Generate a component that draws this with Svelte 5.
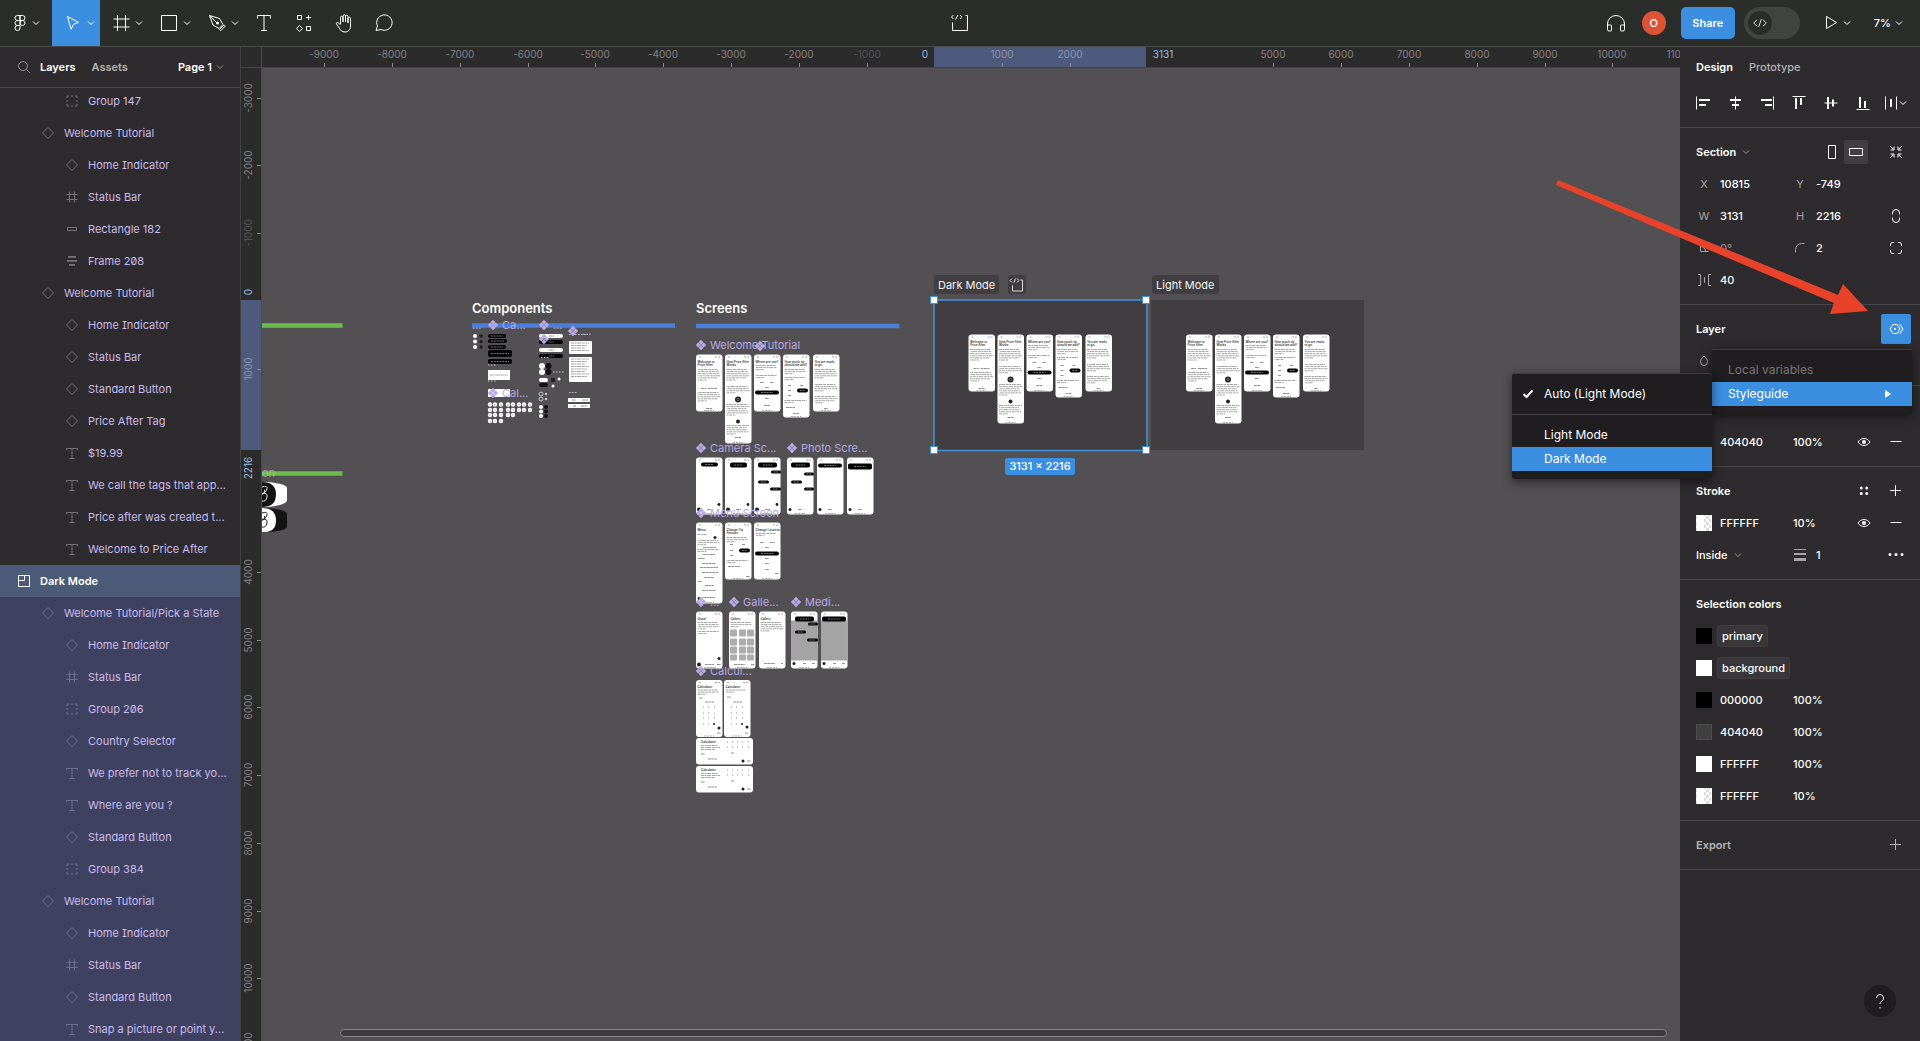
<script lang="ts">
  type Icon = { s?: string; f?: string };
  const icons: Record<string, Icon> = {
    figma: { s: 'M9.5 4.5h2.5v5H9.5a2.5 2.5 0 0 1 0-5zM12 4.5h2.5a2.5 2.5 0 0 1 0 5H12zM9.5 9.5H12v5H9.5a2.5 2.5 0 0 1 0-5zM14.5 9.5a2.5 2.5 0 1 1 0 5a2.5 2.5 0 1 1 0-5zM9.5 14.5H12v2.500a2.500 2.500 0 1 1-2.500-2.500z' },
    cursor: { s: 'M6.500 5.500l11 6-5 1.800-2.500 5z' },
    frame: { s: 'M8.500 4v16M16.500 4v16M4.500 8h16M4.500 16h16' },
    square: { s: 'M4.500 4.500h15v15h-15z' },
    pen: { s: 'M4.500 4.500l3.500 9.500 6 3.500 4-4-3.500-6zM4.500 4.500l7.200 7.200M14.500 18.500l4.500-4.500 1.200 1.200-4.500 4.500z', f: 'M12.500 10.500a1.500 1.500 0 1 1 0 3a1.500 1.500 0 1 1 0-3z' },
    text: { s: 'M5.500 7.500v-3h13v3M12 4.500v15M9 19.500h6' },
    resources: { s: 'M5.500 4.500h4v4h-4zM14.500 15.500h4v4h-4zM16.500 4v5M14 6.500h5M7.500 14.500l3 3-3 3-3-3z' },
    hand: { s: 'M8.500 13V6.500a1.250 1.250 0 0 1 2.500 0V11M11 11V5a1.250 1.250 0 0 1 2.500 0v6M13.500 11V5.500a1.250 1.250 0 0 1 2.500 0V12M16 12V7.500a1.250 1.250 0 0 1 2.500 0V15c0 3.500-2 6-5.500 6-3 0-4.500-1.500-5.800-4L4.500 13c-.6-1.300 1-2.200 2-1.200L8.500 14' },
    comment: { s: 'M4 19.500l1.500-4.500a7.700 7.700 0 1 1 3.500 3.500z' },
    devready: { s: 'M17.500 4.500h2v15h-15v-8M5.500 4L3.500 6l2 2M12 4l2 2-2 2M10 4L7.500 8.500' },
    headphones: { s: 'M3.500 18v-5a8.500 8.500 0 0 1 17 0v5M3.500 14h3a1 1 0 0 1 1 1v4a1 1 0 0 1-1 1h-1.500a1.500 1.500 0 0 1-1.500-1.500zM20.500 14h-3a1 1 0 0 0-1 1v4a1 1 0 0 0 1 1h1.500a1.500 1.500 0 0 0 1.500-1.500z' },
    code: { s: 'M8.500 8L4.500 12l4 4M15.500 8l4 4-4 4M13.500 7.500l-3 9' },
    play: { s: 'M7.500 5.500v12l10-6z' },
    search: { s: 'M11 6.500a4.500 4.500 0 1 1 0 9a4.500 4.500 0 1 1 0-9zM14.300 14.300l3.700 3.700' },
    component: { s: 'M12 6.500l5.500 5.500-5.500 5.500L6.500 12z' },
    smallframe: { s: 'M9.500 6.500v11M14.500 6.500v11M6.500 9.500h11M6.500 14.500h11' },
    group: { s: 'M7 9V7h2M11 7h2M15 7h2v2M17 11v2M17 15v2h-2M13 17h-2M9 17H7v-2M7 13v-2' },
    rectangle: { s: 'M7.500 10.500h9v3h-9z' },
    stack: { f: 'M8 7h8v1.800H8zM7 11h10v1.800H7zM9 15h6v1.800H9z' },
    type: { s: 'M6.500 9V7.500h11V9M12 7.500v10M9.500 17.500h5' },
    section: { s: 'M6.500 6.500h11v11h-11zM6.500 11.500h6v-5' },
    alignleft: { s: 'M5.500 5.500v13', f: 'M8 8h11v2H8zM8 13h7v2H8z' },
    aligncenter: { s: 'M12.500 5.500v13', f: 'M7 8h11v2H7zM9 13h7v2H9z' },
    alignright: { s: 'M18.500 5.500v13', f: 'M6 8h11v2H6zM10 13h7v2h-7z' },
    aligntop: { s: 'M5.500 5.500h13', f: 'M8 7h2v11H8zM13 7h2v7h-2z' },
    alignmiddle: { s: 'M5.500 12h13', f: 'M8 6h2v12H8zM13 8.500h2v7h-2z' },
    alignbottom: { s: 'M5.500 18.500h13', f: 'M8 6h2v11H8zM13 10h2v7h-2z' },
    distribute: { s: 'M6.500 5.500v13M17.500 5.500v13', f: 'M11 8h2v8h-2z' },
    portrait: { s: 'M8.500 5.500h7v13h-7z' },
    landscape: { s: 'M5.500 8.500h13v7h-13z' },
    shrink: { s: 'M6 6l3.500 3.500M10 6.500V10H6.500M18 6l-3.500 3.500M14 6.500V10h3.500M6 18l3.500-3.500M10 17.500V14H6.500M18 18l-3.500-3.500M14 17.500V14h3.500' },
    link: { s: 'M8.500 10.500V9a3.500 3.500 0 0 1 7 0v1.500M8.500 13.500V15a3.500 3.500 0 0 0 7 0v-1.500' },
    corners: { s: 'M6.500 10V8.500a2 2 0 0 1 2-2H10M14 6.500h1.500a2 2 0 0 1 2 2V10M17.500 14v1.500a2 2 0 0 1-2 2H14M10 17.500H8.500a2 2 0 0 1-2-2V14' },
    angle: { s: 'M8.500 7.500v8h8M8.500 10.500a5 5 0 0 1 5 5' },
    radius: { s: 'M7.500 16.500v-3a6 6 0 0 1 6-6h3' },
    spacing: { s: 'M6 6.500h2.500v11H6M12.500 9v6M19 6.500h-2.500v11H19' },
    drop: { s: 'M12 7c2 2 3.500 3.500 3.500 5.500a3.500 4 0 0 1-7 0C8.500 10.500 10 9 12 7z' },
    eye: { s: 'M6 12c3.200-4.700 8.800-4.700 12 0c-3.200 4.700-8.800 4.700-12 0z', f: 'M12 10a2 2 0 1 1 0 4a2 2 0 1 1 0-4z' },
    minus: { s: 'M6.500 11.500h11' },
    plus: { s: 'M6 11.500h11M11.500 6v11' },
    dots: { f: 'M9.300 7.500a1.500 1.500 0 1 1 0 3a1.500 1.500 0 1 1 0-3zM14.700 7.500a1.500 1.500 0 1 1 0 3a1.500 1.500 0 1 1 0-3zM9.300 13a1.500 1.500 0 1 1 0 3a1.500 1.500 0 1 1 0-3zM14.700 13a1.500 1.500 0 1 1 0 3a1.500 1.500 0 1 1 0-3z' },
    more: { f: 'M6 10a1.500 1.500 0 1 1 0 3a1.500 1.500 0 1 1 0-3zM12 10a1.500 1.500 0 1 1 0 3a1.500 1.500 0 1 1 0-3zM18 10a1.500 1.500 0 1 1 0 3a1.500 1.500 0 1 1 0-3z' },
    weight: { f: 'M6 6h12v1H6zM6 10h12v2H6zM6 15h12v3H6z' },
    variables: { s: 'M9 7.500h4l3 4.500-3 4.500H9L6 12zM15 7.500h1l3 4.500-3 4.500h-1', f: 'M11 11a1 1 0 1 1 0 2a1 1 0 1 1 0-2z' },
    help: { s: 'M8.500 9a3.500 3.500 0 1 1 5.500 3c-1.300.9-2 1.500-2 3M12 18v1.500' },
    check: { s: 'M7.500 12l3 3 6-6.500' },
  };

  const tools = [
    { icon: 'figma', label: 'Main menu', menu: true, cls: 'main' },
    { icon: 'cursor', label: 'Move', menu: true, cls: 'active' },
    { icon: 'frame', label: 'Frame', menu: true, cls: '' },
    { icon: 'square', label: 'Rectangle', menu: true, cls: '' },
    { icon: 'pen', label: 'Pen', menu: true, cls: '' },
    { icon: 'text', label: 'Text', menu: false, cls: '' },
    { icon: 'resources', label: 'Resources', menu: false, cls: '' },
    { icon: 'hand', label: 'Hand', menu: false, cls: '' },
    { icon: 'comment', label: 'Comment', menu: false, cls: '' },
  ];

  const layers: [number, string, string][] = [
    [2, 'group', 'Group 147'],
    [1, 'component', 'Welcome Tutorial'],
    [2, 'component', 'Home Indicator'],
    [2, 'smallframe', 'Status Bar'],
    [2, 'rectangle', 'Rectangle 182'],
    [2, 'stack', 'Frame 208'],
    [1, 'component', 'Welcome Tutorial'],
    [2, 'component', 'Home Indicator'],
    [2, 'component', 'Status Bar'],
    [2, 'component', 'Standard Button'],
    [2, 'component', 'Price After Tag'],
    [2, 'type', '$19.99'],
    [2, 'type', 'We call the tags that app...'],
    [2, 'type', 'Price after was created t...'],
    [2, 'type', 'Welcome to Price After'],
    [0, 'section', 'Dark Mode'],
    [1, 'component', 'Welcome Tutorial/Pick a State'],
    [2, 'component', 'Home Indicator'],
    [2, 'smallframe', 'Status Bar'],
    [2, 'group', 'Group 206'],
    [2, 'component', 'Country Selector'],
    [2, 'type', 'We prefer not to track yo...'],
    [2, 'type', 'Where are you ?'],
    [2, 'component', 'Standard Button'],
    [2, 'group', 'Group 384'],
    [1, 'component', 'Welcome Tutorial'],
    [2, 'component', 'Home Indicator'],
    [2, 'smallframe', 'Status Bar'],
    [2, 'component', 'Standard Button'],
    [2, 'type', 'Snap a picture or point y...'],
  ];
  const selected = 15;

  const hTicks = [-9, -8, -7, -6, -5, -4, -3, -2, -1, 1, 2, 5, 6, 7, 8, 9, 10, 11];
  const vTicks = [-3, -2, -1, 1, 4, 5, 6, 7, 8, 9, 10, 11];
  const hx = (n: number) => Math.round(934.4 + n * 67.8);
  const vy = (n: number) => Math.round(300.8 + n * 67.75);

  const aligns = ['alignleft', 'aligncenter', 'alignright', 'aligntop', 'alignmiddle', 'alignbottom', 'distribute'];
  const colors = [
    { sw: 'black', hex: '000000', op: '100%' },
    { sw: 'grey', hex: '404040', op: '100%' },
    { sw: 'white', hex: 'FFFFFF', op: '100%' },
    { sw: 'half', hex: 'FFFFFF', op: '10%' },
  ];

  // Paragraphs are [first line y, line count]; pills are [x, y, width, height].
  type Phone = {
    x: number; h: number; title?: string[]; para?: [number, number][];
    pills?: [number, number, number, number][]; dots?: [number, number, number][];
    marks?: [number, number, number][]; grey?: boolean; tiles?: boolean;
  };
  const tutorial: Phone[] = [
    { x: 0, h: 57, title: ['Welcome to', 'Price After'], para: [[15, 6], [38, 5]], marks: [[5, 34, 5], [12, 34, 9], [10, 54, 6]] },
    { x: 29, h: 89, title: ['How Price After', 'Works'], para: [[15, 6], [32, 4], [50, 6], [71, 5]], dots: [[13, 45, 3], [13, 67, 2]], marks: [[10, 83, 6]] },
    { x: 58, h: 57, title: ['Where are you?'], para: [[11, 3], [21, 2]], marks: [[6, 28, 4], [16, 28, 4], [11, 33, 4], [11, 44, 4], [10, 51, 6]], pills: [[1, 36, 24, 4]] },
    { x: 87, h: 63, title: ['How much tip', 'should we add?'], para: [[15, 3], [23, 2], [46, 2]], marks: [[5, 31, 3], [17, 31, 3], [5, 36, 3], [5, 41, 3], [3, 53, 9], [10, 59, 6]], pills: [[14, 34, 11, 4]] },
    { x: 117, h: 57, title: ['You are ready', 'to go.'], para: [[15, 5], [30, 4], [42, 4]], marks: [[11, 54, 4]] },
  ];
  const camera: Phone[] = [
    { x: 696, h: 57, pills: [[5, 5, 17, 4]], marks: [[11, 52, 5], [21, 47, 3]], dots: [[3, 52, 2], [23, 47, 1.4]] },
    { x: 725, h: 57, pills: [[5, 5, 17, 5]], marks: [[11, 52, 5]], dots: [[3, 52, 2], [23, 47, 1.4]] },
    { x: 754, h: 57, pills: [[4, 5, 19, 5], [17, 13, 10, 3], [4, 23, 11, 3], [16, 30, 11, 3]], marks: [[11, 52, 5]], dots: [[3, 52, 2], [23, 47, 1.4]] },
    { x: 787, h: 57, pills: [[4, 5, 19, 5], [17, 15, 10, 3], [4, 23, 11, 3], [17, 30, 10, 3]], marks: [[11, 52, 4]], dots: [[3, 52, 1.500]] },
    { x: 817, h: 57, pills: [[1, 6, 24, 4]], marks: [[11, 52, 4]], dots: [[3, 52, 1.500]] },
    { x: 847, h: 57, pills: [[1, 6, 24, 6]], marks: [[11, 52, 4]], dots: [[3, 52, 1.500]] },
  ];
  const menus: Phone[] = [
    { x: 696, h: 81, title: ['Menu'], para: [[12, 1], [18, 3], [27, 2]], marks: [[7, 25, 13], [7, 32, 12], [2, 36, 7], [6, 41, 14], [4, 45, 18], [6, 50, 16], [8, 55, 10], [2, 59, 4], [9, 63, 9], [6, 68, 14], [7, 75, 12]], dots: [[19, 15, 1.500], [3, 76, 1.500]] },
    { x: 725, h: 57, title: ['Change Tip', 'Amount'], para: [[15, 3], [38, 2]], marks: [[5, 22, 3], [17, 22, 3], [5, 28, 3], [5, 33, 3], [3, 44, 12], [21, 54, 4]], pills: [[14, 26, 11, 4]] },
    { x: 754, h: 57, title: ['Change Location'], para: [[11, 2]], marks: [[6, 20, 4], [16, 20, 5], [11, 25, 4], [11, 36, 4], [11, 41, 4], [11, 47, 4], [21, 51, 4]], pills: [[1, 29, 24, 4]] },
  ];
  const gallery: Phone[] = [
    { x: 696, h: 57, title: ['Oops!'], para: [[11, 4], [20, 2]], marks: [[9, 53, 9], [21, 53, 4]], dots: [[3, 53, 2], [23, 47, 1.500]] },
    { x: 729, h: 57, title: ['Gallery'], para: [[11, 3]], tiles: true, marks: [[5, 53, 11], [22, 53, 3]] },
    { x: 759, h: 57, title: ['Gallery'], para: [[11, 5]], marks: [[5, 52, 11], [22, 52, 2]] },
    { x: 791, h: 57, grey: true, pills: [[4, 5, 19, 5], [17, 11, 10, 3], [4, 19, 11, 3], [16, 27, 11, 3]], marks: [[12, 52, 3], [21, 52, 3]], dots: [[3, 52, 1.500]] },
    { x: 821, h: 57, grey: true, pills: [[1, 5, 24, 5]], marks: [[12, 52, 3], [21, 52, 3]], dots: [[3, 52, 1.500]] },
  ];
  const keys: [number, number, number][] = [27, 33, 38, 44].flatMap((y) => [[7, y, 1], [12, y, 1], [18, y, 1]] as [number, number, number][]);
  const calculator: Phone[] = [
    { x: 696, h: 57, title: ['Calculator'], para: [[10, 3]], marks: [[3, 18, 4], [9, 22, 9], ...keys, [21, 53, 4]], dots: [[18, 44, 1], [23, 48, 1.500]] },
    { x: 724, h: 57, title: ['Calculator'], para: [[10, 2]], marks: [[3, 17, 4], [9, 22, 9], ...keys, [21, 53, 3]], dots: [[18, 44, 1], [23, 47, 1.500]] },
  ];

  const labels: [number, number, string][] = [
    [701, 345, 'Welcome Tutorial'], [760, 346, ''],
    [701, 448, 'Camera Sc...'], [792, 448, 'Photo Scre...'],
    [701, 513, 'Menu Screen'],
    [701, 602, '...'], [734, 602, 'Galle...'], [796, 602, 'Medi...'],
    [701, 671, 'Calcul...'],
    [493, 325, 'Ca...'], [544, 325, '...'], [544, 339, ''], [573, 331, '...'], [493, 393, 'Cal...'],
  ];
  const keypad: [number, number][] = [
    ...[0, 1].flatMap((r) => [490, 495, 501, 508, 513, 519, 524, 530].map((x) => [x, 404.500 + r * 5.500] as [number, number])),
    [490, 415], [495, 415], [501, 415], [508, 415], [513, 415], [490, 421], [495, 421], [501, 421],
  ];
</script>

{#snippet icon(name: string)}
  <svg class="icon" width="24" height="24" viewBox="0 0 24 24" aria-hidden="true">
    {#if icons[name].s}<path class="stroke" d={icons[name].s} />{/if}
    {#if icons[name].f}<path class="solid" d={icons[name].f} />{/if}
  </svg>
{/snippet}

{#snippet chev()}
  <svg class="chev" width="8" height="8" viewBox="0 0 8 8" aria-hidden="true"><path class="stroke" d="M1 2.500l3 3 3-3" /></svg>
{/snippet}

{#snippet phone(p: Phone, x: number, y: number)}
  <g transform="translate({x} {y})">
    <rect width="26.500" height={p.h} rx="3" fill="#fff" />
    <path d="M3 2.500h3M19 2.500h5" class="faint" />
    <path d="M8 {p.h - 1}h10" class="faint" />
    {#if p.grey}<rect y="9" width="26.500" height="40" fill="#a5a4a5" />{/if}
    {#if p.tiles}
      {#each [18, 27, 35, 43] as ty}
        {#each [1, 10, 18] as tx}<rect x={tx} y={ty} width="7" height={ty === 43 ? 6 : 7} rx="1" fill="#adadad" />{/each}
      {/each}
    {/if}
    {#each p.title ?? [] as line, i}<text class="tiny" x="1.500" y={8 + i * 3.500}>{line}</text>{/each}
    {#each p.para ?? [] as [py, n], k}
      {#each Array(n) as _, i}
        <path class="line" stroke-dashoffset={i * 3 + k * 2} d="M1.500 {py + i * 2.100}h{i === n - 1 ? 9 : 20 + ((i * 5 + k) % 4)}" />
      {/each}
    {/each}
    {#each p.marks ?? [] as [mx, my, w]}<path class="mark" d="M{mx} {my}h{w}" />{/each}
    {#each p.pills ?? [] as [px, py, w, h]}
      <rect x={px} y={py} width={w} height={h} rx={h > 4 ? 1.800 : h / 2} fill="#050505" />
      <path class="pilltext" d="M{px + w * 0.25} {py + h / 2}h{w / 2}" />
    {/each}
    {#each p.dots ?? [] as [cx, cy, r]}
      <circle {cx} {cy} {r} fill="#222" />
      {#if r > 2.500}<circle {cx} {cy} r="1.200" fill="none" stroke="#999" stroke-width=".6" />{/if}
    {/each}
  </g>
{/snippet}

{#snippet diamonds(x: number, y: number)}
  <path transform="translate({x} {y})" fill="#b9a9e6" d="M0-5.200l2.500 2.500L0-.2l-2.500-2.500zM0 .2l2.500 2.500L0 5.200l-2.500-2.500zM-2.700-2.500L-.2 0l-2.500 2.500L-5.200 0zM2.700-2.500L5.200 0 2.700 2.500.2 0z" />
{/snippet}

<div class="app">
  <header class="toolbar">
    <nav class="tools" aria-label="Tools">
      {#each tools as t}
        <button class="tool {t.cls}" class:wide={t.menu} aria-label={t.label}>
          {@render icon(t.icon)}
          {#if t.menu}{@render chev()}{/if}
        </button>
      {/each}
    </nav>
    <button class="tool" aria-label="Ready for dev">{@render icon('devready')}</button>
    <div class="actions">
      <button class="plain" aria-label="Audio">{@render icon('headphones')}</button>
      <button class="avatar" aria-label="Account">O</button>
      <button class="share">Share</button>
      <label class="toggle"><input type="checkbox" aria-label="Dev mode" /><span class="knob">{@render icon('code')}</span></label>
      <button class="plain play" aria-label="Present">{@render icon('play')}{@render chev()}</button>
      <button class="plain zoom">7%{@render chev()}</button>
    </div>
  </header>

  <aside class="left">
    <div class="lefthead">
      <button class="plain dim" aria-label="Search">{@render icon('search')}</button>
      <button class="plain bold">Layers</button>
      <button class="plain bold soft assets">Assets</button>
      <button class="plain bold page">Page 1{@render chev()}</button>
    </div>
    <div class="scroll">
      <ul class="layers">
        {#each layers as [level, kind, name], i}
          <li class="layer l{level}" class:sel={i === selected} class:child={i > selected}>
            {@render icon(kind)}<span>{name}</span>
          </li>
        {/each}
      </ul>
    </div>
  </aside>

  <main class="stage">
    <div class="corner"></div>
    <svg class="hruler" aria-label="Horizontal ruler">
      <g transform="translate(-262 -47)">
        <rect x="934" y="47" width="212" height="20" class="range" />
        {#each hTicks as n}
          <text x={hx(n)} y="58" class="num" class:fade={n === -1} class:inrange={n === 1 || n === 2}>{n * 1000}</text>
          <path d="M{hx(n) + 0.5} 63v4" class="tick" />
        {/each}
        <text x="925" y="58" class="num edge">0</text>
        <text x="1163" y="58" class="num edge">3131</text>
      </g>
    </svg>
    <svg class="vruler" aria-label="Vertical ruler">
      <g transform="translate(-241 -68)">
        <rect x="241" y="300" width="20" height="150" class="range" />
        {#each vTicks as n}
          <text transform="translate(252 {vy(n)}) rotate(-90)" class="num" class:fade={n === -1} class:inrange={n === 1}>{n * 1000}</text>
          <path d="M257 {vy(n) + 0.5}h4" class="tick" />
        {/each}
        <text transform="translate(252 292) rotate(-90)" class="num edge">0</text>
        <text transform="translate(252 468) rotate(-90)" class="num edge">2216</text>
      </g>
    </svg>
    <div class="canvas">
      <svg class="art" role="img" aria-label="Canvas">
        <g transform="translate(-262 -68)">
          <path d="M262 325.500h80.500M262 473.500h80.500" stroke="#6bbd50" stroke-width="4.500" />
          <text x="262" y="477" class="label cut">on</text>
          <path d="M262 482h6q19 2 19 6v12q0 5-19 7h-6z" fill="#fff" />
          <path d="M262 482q14 0 14 12.500T262 507z" fill="#141314" />
          <path d="M262 508h6q19 2 19 6v12q0 5-19 6h-6z" fill="#141314" />
          <path d="M262 508q14 0 14 12.500T262 532z" fill="#fff" />
          <path d="M262 487q6-2 5 2t-5 5q6-2 5 3t-5 4M264 490q2 0 0 3" class="squiggle" stroke="#ddd" />
          <path d="M262 513q6-2 5 2t-5 5q6-2 5 3t-5 4M264 516q2 0 0 3" class="squiggle" stroke="#222" />

          <text x="472" y="313" class="title">Components</text>
          <text x="696" y="313" class="title">Screens</text>
          <path d="M472 325.500h203M696 326h203.500" stroke="#4a7fd9" stroke-width="4.500" />

          {#each [336, 341.500, 347] as y}
            <circle cx="475" cy={y} r="2" fill="#fff" /><circle cx="481" cy={y} r="1.800" fill="#222" />
          {/each}
          {#each [[488, 334, 18, 4], [488, 339, 19, 4], [488, 345, 18, 4], [488, 350, 24, 7], [488, 359, 24, 5]] as [x, y, w, h]}
            <rect {x} {y} width={w} height={h} rx="2" fill="#050505" />
            <path class="pilltext" d="M{x + 3} {y + h / 2}h{w - 6}" />
          {/each}
          <rect x="488" y="370" width="22" height="10" fill="#fff" /><path class="line" d="M490 375h18" />
          <rect x="488" y="389" width="22" height="8" fill="#fff" />
          {#each keypad as [cx, cy]}
            <circle {cx} {cy} r="2.200" fill="#fff" /><circle {cx} {cy} r=".6" fill="#888" />
          {/each}
          {#each [[334, '#fff'], [340, '#050505'], [348, '#fff'], [354, '#050505']] as [y, fill]}
            <rect x="539" y={Number(y)} width="24" height="4" rx="2" fill={String(fill)} />
            <path class="mark" d="M549 {Number(y) + 2}h5" />
          {/each}
          {#each [366, 372] as y}
            <circle cx="542" cy={y} r="3" fill="#fff" /><circle cx="548.500" cy={y} r="3" fill="#111" />
          {/each}
          <path d="M553 372h12" class="specks" />
          <rect x="539" y="378" width="9" height="4" rx="2" fill="#fff" /><rect x="539" y="383" width="9" height="4" rx="2" fill="#111" />
          <rect x="551" y="378" width="4" height="4" fill="#222" /><circle cx="559" cy="379" r="1.500" fill="#fff" /><circle cx="553" cy="386" r="1.500" fill="#fff" />
          {#each [394, 399] as y}
            <circle cx="541" cy={y} r="2" fill="none" stroke="#ccc" /><circle cx="546" cy={y} r="1.200" fill="#ccc" />
          {/each}
          {#each [407, 411.500, 416] as y}
            <circle cx="541" cy={y} r="2" fill="#fff" /><circle cx="546" cy={y} r="2" fill="#111" />
          {/each}
          {#each [[569, 341, 13], [569, 357, 25]] as [x, y, h]}
            <rect {x} {y} width="23" height={h} rx="1" fill="#fff" />
            {#each Array(Math.floor(h / 3)) as _, i}<path class="line" d="M{x + 2} {y + 2 + i * 2.500}h{18 - (i % 3) * 2}" />{/each}
          {/each}
          <path d="M569 334.500h19M569 392.500h8M488 365h8M488 381h8M541 357.500h8" class="specks" />
          <rect x="568" y="398" width="22" height="4" fill="#fff" /><rect x="568" y="404" width="22" height="4" fill="#fff" />
          <path class="mark" d="M572 400h4M582 400h6M573 406h3M581 406h6" />

          <rect x="934" y="300" width="213" height="150" class="board" />
          <rect x="1151" y="300" width="213" height="150" class="board" />

          {#each tutorial as p}
            {@render phone(p, 696 + p.x, 354.500)}
            {@render phone(p, 968.500 + p.x, 334.500)}
            {@render phone(p, 1186 + p.x, 334.500)}
          {/each}
          {#each camera as p}{@render phone(p, p.x, 457.500)}{/each}
          {#each menus as p}{@render phone(p, p.x, 522.500)}{/each}
          {#each gallery as p}{@render phone(p, p.x, 611.500)}{/each}
          {#each calculator as p}{@render phone(p, p.x, 680)}{/each}
          {#each [738, 766] as y}
            <g transform="translate(696 {y})">
              <rect width="57" height="26.500" rx="3" fill="#fff" />
              <text class="tiny" x="5" y="5">Calculator</text>
              <path class="line" d="M5 7.500h17M5 9.500h19M5 11.500h14" />
              <path class="mark" d="M5 16h4M12 21h9M31 4h1M36 4h1M41 4h1M46 4h1M52 4h1M31 9h1M36 9h1M41 9h1M46 9h1M52 9h1M35 15h3" />
              <circle cx="47" cy="23" r="1.500" fill="#222" /><path class="mark" d="M51 23h4" />
            </g>
          {/each}

          <text x="472" y="329" class="label">...</text>
          {#each labels as [x, y, t]}
            {@render diamonds(x, y)}
            <text x={x + 9} y={y + 4} class="label">{t}</text>
          {/each}

          <rect x="934" y="300" width="213" height="150.500" class="selbox" />
          {#each [[934, 300], [1146, 300], [934, 450], [1146, 450]] as [x, y]}
            <rect x={x - 3.500} y={y - 3.500} width="7" height="7" fill="#fff" stroke="#3b8ee0" />
          {/each}
          <rect x="934" y="275" width="65" height="19" rx="3" class="chip" />
          <text x="938" y="289" class="name">Dark Mode</text>
          <rect x="1008" y="275" width="18" height="19" rx="3" class="chip" />
          <path transform="translate(1005 273)" class="devmini" d="M15.500 7h2v11h-10v-5.500M7 5.500L5 7.500l2 2M12 5.500l2 2-2 2M10.500 5.500l-1.500 4" />
          <rect x="1152" y="275" width="67" height="19" rx="3" class="chip" />
          <text x="1156" y="289" class="name">Light Mode</text>
          <rect x="1005" y="458" width="70" height="17" rx="2" fill="#3b8ee0" />
          <text x="1040" y="470" class="size">3131 × 2216</text>
        </g>
      </svg>
      <div class="scrollbar"></div>
    </div>
  </main>

  <aside class="right">
    <section class="top">
      <div class="tabs"><button class="plain bold">Design</button><button class="plain medium soft">Prototype</button></div>
      <div class="aligns">
        {#each aligns as a}<button class="plain" aria-label={a}>{@render icon(a)}{#if a === 'distribute'}{@render chev()}{/if}</button>{/each}
      </div>
    </section>
    <section>
      <div class="row head">
        <button class="plain bold">Section{@render chev()}</button>
        <div class="end">
          <button class="plain" aria-label="Portrait">{@render icon('portrait')}</button>
          <button class="plain pressed" aria-label="Landscape">{@render icon('landscape')}</button>
          <button class="plain gap" aria-label="Shrink to fit">{@render icon('shrink')}</button>
        </div>
      </div>
      <div class="row fields">
        <label><span>X</span><input value="10815" /></label>
        <label><span>Y</span><input value="-749" /></label>
      </div>
      <div class="row fields">
        <label><span>W</span><input value="3131" /></label>
        <label><span>H</span><input value="2216" /></label>
        <button class="plain" aria-label="Constrain proportions">{@render icon('link')}</button>
      </div>
      <div class="row fields">
        <label class="off"><span>{@render icon('angle')}</span><input value="0°" aria-label="Rotation" disabled /></label>
        <label><span>{@render icon('radius')}</span><input value="2" aria-label="Corner radius" /></label>
        <button class="plain" aria-label="Independent corners">{@render icon('corners')}</button>
      </div>
      <div class="row fields">
        <label><span>{@render icon('spacing')}</span><input value="40" aria-label="Spacing" /></label>
      </div>
    </section>
    <section>
      <div class="row head">
        <h2>Layer</h2>
        <button class="plain vars" aria-label="Variable modes">{@render icon('variables')}</button>
        <div class="menu" role="menu">
          <p>Local variables</p>
          <button class="item hot" role="menuitem">Styleguide<svg width="6" height="8" viewBox="0 0 6 8" aria-hidden="true"><path d="M0 0l6 4-6 4z" fill="#fff" /></svg></button>
          <div class="menu sub" role="menu">
            <button class="item" role="menuitem"><span class="tickmark">{@render icon('check')}</span>Auto (Light Mode)</button>
            <hr />
            <button class="item" role="menuitem">Light Mode</button>
            <button class="item hot" role="menuitem">Dark Mode</button>
          </div>
        </div>
      </div>
      <div class="row fields"><span>{@render icon('drop')}</span></div>
    </section>
    <section>
      <div class="row head"></div>
      <div class="row paint">
        <span class="swatch grey"></span><input value="404040" aria-label="Fill color" /><input class="op" value="100%" aria-label="Fill opacity" />
        <div class="end">
          <button class="plain" aria-label="Hide fill">{@render icon('eye')}</button>
          <button class="plain wide" aria-label="Remove fill">{@render icon('minus')}</button>
        </div>
      </div>
    </section>
    <section>
      <div class="row head">
        <h2>Stroke</h2>
        <div class="end">
          <button class="plain" aria-label="Stroke styles">{@render icon('dots')}</button>
          <button class="plain wide" aria-label="Add stroke">{@render icon('plus')}</button>
        </div>
      </div>
      <div class="row paint">
        <span class="swatch half"></span><input value="FFFFFF" aria-label="Stroke color" /><input class="op" value="10%" aria-label="Stroke opacity" />
        <div class="end">
          <button class="plain" aria-label="Hide stroke">{@render icon('eye')}</button>
          <button class="plain wide" aria-label="Remove stroke">{@render icon('minus')}</button>
        </div>
      </div>
      <div class="row fields">
        <button class="plain place">Inside{@render chev()}</button>
        <label><span>{@render icon('weight')}</span><input value="1" aria-label="Stroke weight" /></label>
        <button class="plain" aria-label="Advanced stroke">{@render icon('more')}</button>
      </div>
    </section>
    <section>
      <div class="row head"><h2>Selection colors</h2></div>
      <div class="row paint"><span class="swatch black"></span><button class="token">primary</button></div>
      <div class="row paint"><span class="swatch white"></span><button class="token">background</button></div>
      {#each colors as c}
        <div class="row paint">
          <span class="swatch {c.sw}"></span><input value={c.hex} aria-label="Selection color" /><input class="op" value={c.op} aria-label="Selection opacity" />
        </div>
      {/each}
    </section>
    <section>
      <div class="row head"><h2 class="soft">Export</h2><div class="end soft"><button class="plain wide" aria-label="Add export">{@render icon('plus')}</button></div></div>
    </section>
    <button class="help" aria-label="Help">{@render icon('help')}</button>
  </aside>

  <svg class="arrow" width="420" height="340" viewBox="1500 0 420 340" aria-hidden="true">
    <path fill="#e8432a" d="M1558 180L1838 295 1843 284 1868 311 1830 314 1834 303 1556 185z" />
  </svg>
</div>

<style>
  :global(body) { background: #525052; overflow: hidden; }
  .app {
    position: relative; display: grid; height: 100vh; overflow: hidden;
    grid-template: 47px minmax(0, 1fr) / 241px minmax(0, 1fr) 240px;
    font: 11px/16px Inter, "Liberation Sans", sans-serif; color: #fff; background: #525052;
  }
  button, input { font: inherit; color: inherit; background: none; border: 0; padding: 0; margin: 0; }
  h2, p, ul { margin: 0; padding: 0; font: inherit; list-style: none; }
  svg { display: block; flex: none; }
  .stroke { fill: none; stroke: currentColor; }
  .solid { fill: currentColor; }

  .toolbar { grid-column: 1 / -1; display: grid; grid-template-columns: 1fr auto 1fr; background: #2b2d2b; border-bottom: 1px solid #484948; }
  .tools { display: flex; }
  .tool { display: flex; align-items: center; justify-content: center; width: 40px; height: 46px; }
  .tool.wide { width: 48px; gap: 2px; justify-content: flex-start; padding-left: 9px; }
  .tool.main { width: 52px; gap: 0; padding-left: 8px; }
  .tool.active { background: #3b8ee0; }
  .actions { display: flex; align-items: center; justify-content: flex-end; padding-right: 17px; }
  .plain { display: flex; align-items: center; }
  .avatar { width: 24px; height: 24px; margin-left: 14px; border-radius: 50%; background: #dd5434; text-align: center; font-weight: 500; }
  .share { width: 54px; height: 32px; margin: 0 9px 0 15px; border-radius: 5px; background: #3b8ee0; font-weight: 600; }
  .toggle { width: 56px; height: 32px; border-radius: 16px; background: #424442; margin-right: 19px; }
  .toggle input { position: absolute; opacity: 0; }
  .knob { display: grid; place-items: center; width: 24px; height: 24px; margin: 4px; border-radius: 50%; background: #2b2d2b; }
  .knob svg { width: 20px; height: 20px; }
  .zoom { gap: 4px; margin-left: 23px; font-weight: 500; }

  .left { display: flex; flex-direction: column; min-height: 0; background: #2d2b2d; border-right: 1px solid #444244; }
  .lefthead { display: flex; align-items: center; flex: none; height: 40px; padding: 0 16px 0 12px; border-bottom: 1px solid #4a494a; }
  .lefthead .bold { margin-left: 4px; }
  .lefthead .assets { margin-left: 16px; }
  .lefthead .page { margin-left: auto; gap: 4px; }
  .bold { font-weight: 600; }
  .medium { font-weight: 500; }
  .soft { color: #b5b4b5; }
  .dim { color: #8d8c8d; }
  .page svg, .head .chev, .place .chev { color: #9a999a; }
  .scroll { flex: 1; min-height: 0; overflow: hidden; }
  .layers { margin-top: -3px; }
  .layer { display: flex; align-items: center; gap: 4px; height: 32px; padding-left: 12px; color: #c9bbee; white-space: nowrap; font-feature-settings: "zero", "cv08"; }
  .layer .icon { color: #757379; }
  .l1 { padding-left: 36px; }
  .l2 { padding-left: 60px; }
  .child { background: #3e4260; }
  .child .icon { color: #6d7090; }
  .sel { background: #4b5a77; color: #fff; font-weight: 600; }
  .sel .icon { color: #fff; }

  .stage { display: grid; grid-template: 21px minmax(0, 1fr) / 21px minmax(0, 1fr); min-width: 0; min-height: 0; }
  .corner, .hruler, .vruler { background: #2c2b2c; }
  .corner, .hruler { border-bottom: 1px solid #444344; box-sizing: border-box; }
  .corner, .vruler { border-right: 1px solid #4a494a; box-sizing: border-box; }
  .hruler, .vruler { width: 100%; height: 100%; overflow: hidden; }
  .range { fill: #4d5a7d; }
  .tick { stroke: #8b8a8b; }
  .num { font-size: 10px; fill: #838283; text-anchor: middle; }
  .fade { fill: #555455; }
  .inrange { fill: #8d93a8; }
  .edge { fill: #8fbfe4; }
  .canvas { position: relative; min-width: 0; overflow: hidden; background: #525052; }
  .art { width: 100%; height: 100%; }
  .title { font-size: 13px; font-weight: 600; fill: #fff; }
  .label { font-size: 11px; fill: #b9a9e6; }
  .cut { fill: #c8c8c8; opacity: .6; }
  .tiny { font-size: 3px; font-weight: 600; fill: #333; }
  .line { stroke: #555; stroke-width: .7; stroke-dasharray: 3 .6 2 .5 4 .7; fill: none; opacity: .75; }
  .faint { stroke: #888; stroke-width: .7; stroke-dasharray: 2 1; }
  .mark { stroke: #777; stroke-width: .8; stroke-dasharray: 3 .4; }
  .pilltext { stroke: #bbb; stroke-width: .6; stroke-dasharray: 2 .8; }
  .specks { stroke: #ccc; stroke-dasharray: 1.500 1.500; }
  .squiggle { fill: none; stroke-width: 1; }
  .board { fill: #403e40; }
  .selbox { fill: none; stroke: #4692dc; stroke-width: 1.500; }
  .chip { fill: #403e40; }
  .name { font-size: 11px; fill: #f2f2f2; }
  .devmini { fill: none; stroke: #ddd; }
  .size { font-size: 11px; font-weight: 500; fill: #fff; text-anchor: middle; }
  .scrollbar { position: absolute; left: 78px; right: 13px; bottom: 4px; height: 8px; box-sizing: border-box; border: 1px solid #858385; border-radius: 4px; background: #3d3a3d; }

  .right { position: relative; background: #2d2b2d; }
  .right section { padding: 8px 0; border-bottom: 1px solid #484648; }
  .right .top { padding-top: 0; }
  .tabs { display: flex; gap: 16px; height: 40px; padding-left: 16px; }
  .aligns { display: flex; gap: 8px; height: 32px; padding-left: 11px; }
  .aligns .plain:last-child { margin-left: -4px; }
  .aligns .chev { margin-left: -4px; }
  .row { display: flex; align-items: center; height: 32px; padding-left: 16px; }
  .head { position: relative; font-weight: 600; }
  .head .bold { gap: 6px; }
  .end { display: flex; margin-left: auto; padding-right: 12px; }
  .end .gap { margin-left: 16px; }
  .end .wide { margin-left: 8px; }
  .end .pressed { background: #403e40; border-radius: 2px; }
  .fields { padding-left: 12px; font-weight: 500; }
  .fields label { display: flex; align-items: center; width: 96px; }
  .fields span { display: flex; justify-content: center; width: 24px; margin-right: 4px; color: #a5a4a5; font-weight: 400; }
  .fields input { width: 60px; }
  .off { color: #8a898a; }
  .fields > .plain:last-child { margin-left: auto; margin-right: 12px; }
  .place { width: 92px; margin-left: 4px; gap: 6px; }
  .paint { font-weight: 500; }
  .paint input { width: 73px; margin-left: 8px; }
  .paint input.op { width: 45px; margin-left: 0; }
  .swatch { width: 16px; height: 16px; box-sizing: border-box; border: 1px solid transparent; flex: none; }
  .black { background: #000; }
  .grey { background: #404040; border-color: #4c4b4c; }
  .white { background: #fff; }
  .half { background: linear-gradient(90deg, #fff 50%, transparent 50%), repeating-conic-gradient(#dcdcdc 0 25%, #fff 0 50%) 0 0 / 6px 6px; }
  .token { height: 20px; margin-left: 6px; padding: 0 4px; border-radius: 3px; background: #383638; box-shadow: 0 0 0 1px #403e40; }
  .vars { position: absolute; right: 9px; top: 1px; width: 30px; height: 30px; justify-content: center; border-radius: 2px; background: #3b8ee0; }
  .menu { position: absolute; z-index: 2; left: 32px; top: 36px; width: 200px; box-sizing: border-box; padding: 8px 0; border-top: 1px solid #3d3c3d; background: #1f1d1f; box-shadow: 0 3px 10px rgba(0, 0, 0, .5); font: 400 12px/24px Inter, "Liberation Sans", sans-serif; }
  .menu p { padding-left: 16px; color: #777577; }
  .item { display: flex; align-items: center; width: 100%; height: 24px; padding-left: 16px; white-space: nowrap; }
  .item svg { margin-left: auto; margin-right: 21px; }
  .hot { background: #3b8ee0; }
  .sub { left: -200px; top: 23px; border-radius: 3px; }
  .sub .item { position: relative; padding-left: 32px; }
  .tickmark { position: absolute; left: 4px; }
  .tickmark svg { margin: 0; stroke-width: 2; }
  .menu hr { height: 1px; margin: 8px 0; border: 0; background: #444344; }
  .help { position: absolute; right: 24px; bottom: 24px; display: grid; place-items: center; width: 32px; height: 32px; border-radius: 50%; background: #1f1d1f; }
  .arrow { position: absolute; top: 0; right: 0; pointer-events: none; z-index: 1; }
</style>
